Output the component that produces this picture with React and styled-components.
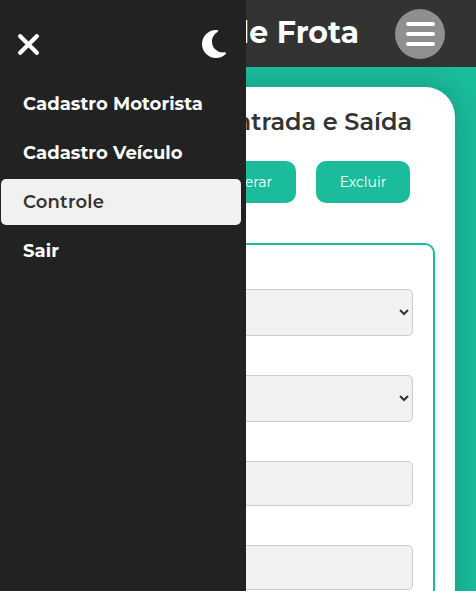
import React from 'react';
import styled, { createGlobalStyle } from 'styled-components';
import { FaMoon } from 'react-icons/fa6';

const GlobalStyle = createGlobalStyle`
  * { box-sizing: border-box; }
  body {
    margin: 0;
    overflow: hidden;
    background: #1abc9c;
    font-family: Montserrat, Inter, sans-serif;
  }
`;

const Page = styled.div`
  position: relative;
  height: 591px;
  overflow: hidden;
  background: #1abc9c;
`;

const Header = styled.header`
  display: flex;
  align-items: center;
  justify-content: flex-end;
  gap: 36px;
  height: 67px;
  padding-right: 31px;
  background: #333;
`;

const Brand = styled.h1`
  margin: 0;
  color: #fff;
  font-size: 30px;
  font-weight: 700;
  line-height: 36px;
  white-space: nowrap;
  padding-bottom: 2px;
`;

const MenuButton = styled.button`
  display: flex;
  flex-direction: column;
  align-items: center;
  justify-content: center;
  gap: 6px;
  width: 50px;
  height: 50px;
  margin-top: 1px;
  padding: 0;
  border: 0;
  border-radius: 50%;
  background: #8f8f8f;
`;

const Bar = styled.span`
  width: 29px;
  height: 4px;
  border-radius: 2px;
  background: #fff;
`;

const Card = styled.main`
  height: 700px;
  margin: 20px 21px 0 20px;
  padding: 20px;
  border-radius: 30px;
  background: #fff;
  box-shadow: 0 0 30px rgba(0, 0, 0, 0.2);
`;

const Title = styled.h2`
  margin: 0 23px 24px 0;
  color: #333;
  font-size: 24px;
  font-weight: 600;
  line-height: 30px;
  text-align: right;
  white-space: nowrap;
`;

const Actions = styled.div`
  display: flex;
  justify-content: flex-end;
  gap: 20px;
  margin: 0 25px 40px 0;
`;

const ActionButton = styled.button`
  width: 94px;
  height: 42px;
  padding: 0;
  border: 0;
  border-radius: 10px;
  background: #1abc9c;
  color: #fff;
  font: 400 14px/20px Montserrat, Inter, sans-serif;
`;

const Form = styled.form`
  display: flex;
  flex-direction: column;
  height: 600px;
  padding: 44px 20.4px 0 20px;
  border: 2px solid #1abc9c;
  border-radius: 10px;
`;

const SelectField = styled.select`
  height: 47px;
  margin-bottom: 39px;
  padding: 0;
  border: 1px solid #ccc;
  border-radius: 5px;
  background: #f1f1f1;
  color: #333;
`;

const InputField = styled.input`
  height: 45px;
  margin-bottom: 39px;
  border: 1px solid #ccc;
  border-radius: 5px;
  background: #f1f1f1;
`;

const Sidebar = styled.aside`
  position: absolute;
  inset: 0 auto 0 0;
  width: 246px;
  padding-top: 28px;
  background: #222;
`;

const Tools = styled.div`
  display: flex;
  align-items: center;
  justify-content: space-between;
  height: 32px;
  margin-bottom: 21px;
  padding: 0 16px 0 18px;
  color: #fff;
`;

const Nav = styled.nav`
  display: flex;
  flex-direction: column;
  gap: 3px;
  padding: 0 5px 0 1px;
`;

const NavLink = styled.a`
  display: flex;
  align-items: center;
  height: 46px;
  padding-left: 22px;
  border-radius: 5px;
  background: ${({ $active }) => ($active ? '#f1f1f1' : 'transparent')};
  color: ${({ $active }) => ($active ? '#333' : '#fff')};
  font-size: 18px;
  font-weight: ${({ $active }) => ($active ? 600 : 700)};
  line-height: 24px;
  padding-bottom: 1px;
  letter-spacing: ${({ $active }) => ($active ? 0.2 : 0.04)}px;
  white-space: nowrap;
`;

const links = [
  { label: 'Cadastro Motorista' },
  { label: 'Cadastro Veículo' },
  { label: 'Controle', active: true },
  { label: 'Sair' },
];

export default function App() {
  return (
    <Page>
      <GlobalStyle />
      <Header>
        <Brand>de Frota</Brand>
        <MenuButton aria-label="Menu">
          <Bar />
          <Bar />
          <Bar />
        </MenuButton>
      </Header>
      <Card>
        <Title>Entrada e Saída</Title>
        <Actions>
          <ActionButton>Alterar</ActionButton>
          <ActionButton>Excluir</ActionButton>
        </Actions>
        <Form>
          <SelectField />
          <SelectField />
          <InputField />
          <InputField />
        </Form>
      </Card>
      <Sidebar>
        <Tools>
          <svg width="21" height="21" viewBox="0 0 21 21" aria-hidden="true">
            <path d="M2.2 2.2L18.8 18.8M18.8 2.2L2.2 18.8" stroke="currentColor" strokeWidth="4.2" strokeLinecap="round" />
          </svg>
          <FaMoon size={32} />
        </Tools>
        <Nav>
          {links.map(({ label, active }) => (
            <NavLink key={label} $active={active}>
              {label}
            </NavLink>
          ))}
        </Nav>
      </Sidebar>
    </Page>
  );
}
